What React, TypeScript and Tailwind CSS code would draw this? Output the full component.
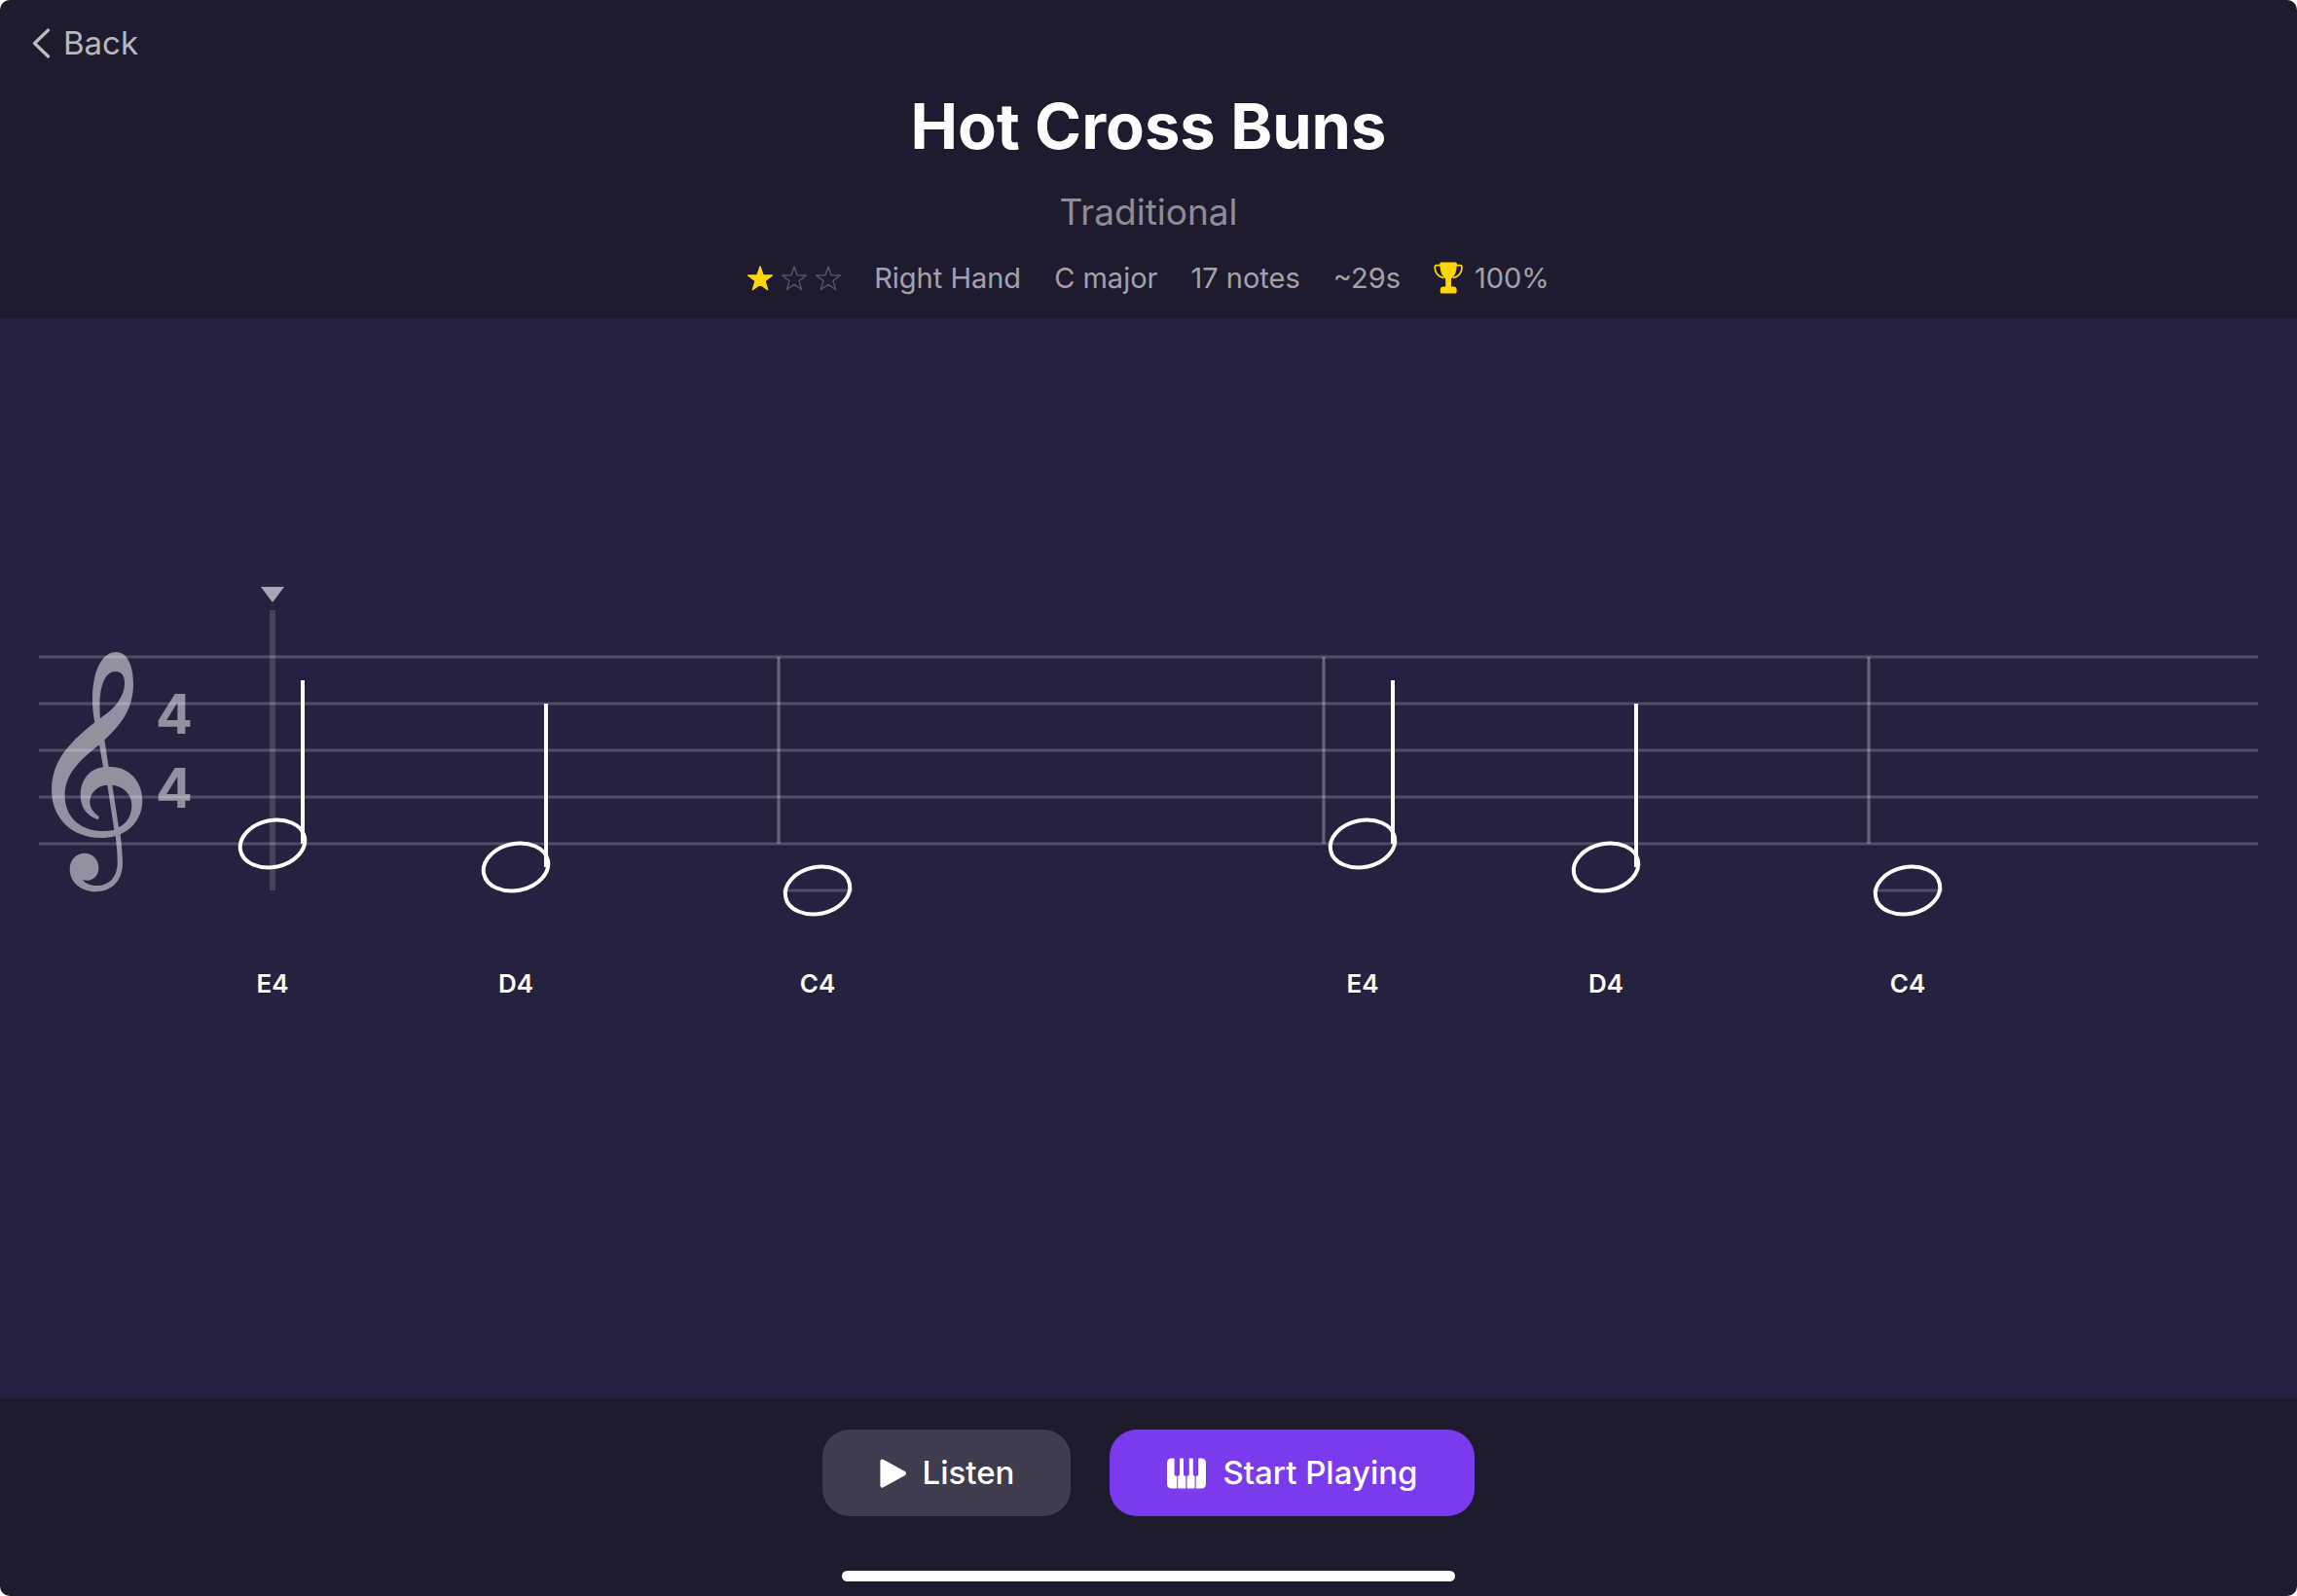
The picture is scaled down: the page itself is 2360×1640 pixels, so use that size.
interface StaffNote {
  name: string;
  x: number;
  y: number;
  stem?: boolean;
  ledger?: boolean;
}

const STAFF_LINES = [73, 121, 169, 217, 265];
const BAR_LINES = [760, 1320, 1880];

const NOTES: StaffNote[] = [
  { name: 'E4', x: 240, y: 265, stem: true },
  { name: 'D4', x: 490, y: 289, stem: true },
  { name: 'C4', x: 800, y: 313, ledger: true },
  { name: 'E4', x: 1360, y: 265, stem: true },
  { name: 'D4', x: 1610, y: 289, stem: true },
  { name: 'C4', x: 1920, y: 313, ledger: true },
];

const STAR_PATH = 'M13 1 L16 9.8 L25.4 10 L17.9 15.6 L20.7 24.6 L13 19.2 L5.3 24.6 L8.1 15.6 L0.6 10 L10 9.8 Z';

function Star({ filled }: { filled: boolean }) {
  return (
    <svg
      viewBox="0 0 26 26"
      className={filled ? 'h-[26px] w-[26px] text-[#ffd60a]' : 'h-[26px] w-[26px] text-white/25'}
      aria-hidden="true"
    >
      <path
        d={STAR_PATH}
        fill={filled ? 'currentColor' : 'none'}
        stroke="currentColor"
        strokeWidth="1.4"
        strokeLinejoin="round"
      />
    </svg>
  );
}

function Trophy() {
  return (
    <svg viewBox="0 0 30 34" className="h-[34px] w-[30px] text-[#ffd700]" aria-hidden="true">
      <path
        d="M7.6 0.6 H22.6 Q24 0.6 23.9 2.2 C23.7 9.5 22 14.4 18 17.4 V25.6 H20.6 Q23.6 25.6 23.6 28.6 V31 Q23.6 32.6 22 32.6 H8.4 Q6.8 32.6 6.8 31 V28.6 Q6.8 25.6 9.8 25.6 H12.2 V17.4 C8.2 14.4 6.5 9.5 6.3 2.2 Q6.2 0.6 7.6 0.6 Z"
        fill="currentColor"
      />
      <path
        d="M7 3.6 H3 Q1.2 3.6 1.2 5.6 C1.2 11 4.5 15.6 10.5 16.6 M23.2 3.6 H27.2 Q29 3.6 29 5.6 C29 11 25.7 15.6 19.7 16.6"
        fill="none"
        stroke="currentColor"
        strokeWidth="1.8"
      />
    </svg>
  );
}

function PianoKeys() {
  return (
    <svg viewBox="-1 0 42 32" className="h-8 w-[42px]" fill="currentColor" aria-hidden="true">
      <path d="M5 0.4 H7.6 V17 Q7.6 18.8 9.4 18.8 H10.3 V31.6 H5 Q0 31.6 0 26.6 V5.4 Q0 0.4 5 0.4 Z" />
      <path d="M13 0.4 H17 V17 Q17 18.8 18.8 18.8 H19.3 V31.6 H11.2 V18.8 Q13 18.8 13 17 Z" />
      <path d="M22.8 0.4 H26.8 V17 Q26.8 18.8 28.6 18.8 V31.6 H20.5 V18.8 H21 Q22.8 18.8 22.8 17 Z" />
      <path d="M32.2 0.4 H35 Q40 0.4 40 5.4 V26.6 Q40 31.6 35 31.6 H29.7 V18.8 H30.4 Q32.2 18.8 32.2 17 Z" />
    </svg>
  );
}

function TrebleClef() {
  return (
    <path
      transform="translate(-20 -22) scale(0.33333)"
      fillRule="evenodd"
      className="fill-white/50"
      d="M232 487 C222 440 224 390 228 370 C236 310 262 270 298 270 C334 270 351 315 351 368 C351 440 318 490 262 541 L275 624 C335 620 379 668 379 727 C379 775 352 815 311 832 C315 870 318 900 318 925 C316 975 285 1009 235 1009 C190 1009 155 980 155 940 C155 910 175 890 201 890 C226 890 244 910 244 935 C244 960 226 975 208 974 C203 974 199 973 195 972 C202 983 217 990 237 990 C278 990 303 962 302 915 C302 890 299 865 296 837 C282 842 265 843 252 843 C165 843 99 785 99 695 C99 600 160 545 232 487 Z
      M249 474 C244 420 248 330 297 330 C315 330 324 345 324 365 C324 410 290 447 249 474 Z
      M246 556 L258 625 C215 630 188 665 188 712 C188 750 210 778 243 787 L245 777 C228 765 217 750 217 732 C217 705 240 681 271 680 L292 819 C280 821 268 822 256 822 C185 822 140 778 140 712 C140 650 180 608 246 556 Z
      M286 680 C322 684 346 710 346 742 C346 775 330 800 306 810 Z"
    />
  );
}

function Note({ note }: { note: StaffNote }) {
  const { name, x, y, stem, ledger } = note;
  return (
    <g>
      {ledger && <line x1={x - 36} x2={x + 36} y1={y} y2={y} className="stroke-white/20" strokeWidth="3" />}
      <ellipse
        cx={x}
        cy={y}
        rx="33.6"
        ry="24"
        transform={`rotate(-12 ${x} ${y})`}
        fill="none"
        stroke="white"
        strokeWidth="4"
      />
      {stem && <line x1={x + 31} x2={x + 31} y1={y - 168} y2={y} stroke="white" strokeWidth="4" />}
      <text x={x} y="418" textAnchor="middle" className="fill-white text-[26px] font-semibold">
        {name}
      </text>
    </g>
  );
}

function Staff() {
  return (
    <svg className="h-[560px] w-full overflow-visible" role="img" aria-label="Sheet music">
      {STAFF_LINES.map((y) => (
        <line key={y} x1="0" x2="100%" y1={y} y2={y} className="stroke-white/20" strokeWidth="3" />
      ))}
      {BAR_LINES.map((x) => (
        <line key={x} x1={x} x2={x} y1="73" y2="265" className="stroke-white/30" strokeWidth="3" />
      ))}
      <TrebleClef />
      <g className="fill-white/50 text-[56px] font-bold" textAnchor="middle">
        <text x="139" y="152">4</text>
        <text x="139" y="228">4</text>
      </g>
      {/* playhead */}
      <rect x="237" y="25" width="6" height="288" className="fill-white/15" />
      <path d="M228 1 H252 L240 17 Z" className="fill-white/60" />
      {NOTES.map((note) => (
        <Note key={note.x} note={note} />
      ))}
    </svg>
  );
}

export default function App() {
  return (
    <div className="min-h-screen bg-white font-['Inter','Liberation_Sans',sans-serif]">
      <div className="flex min-h-screen flex-col overflow-hidden rounded-[10px] bg-[#1e1b2e]">
        <header className="flex flex-col pb-[21px]">
          <nav className="flex px-8 pt-6">
            <button type="button" className="flex items-center gap-[13px] text-[33px] leading-10 text-white/70">
              <svg viewBox="0 0 20 32" className="h-8 w-5" fill="none" aria-hidden="true">
                <path
                  d="M17.5 3 L3.5 16.5 L17.5 30"
                  stroke="currentColor"
                  strokeWidth="3.2"
                  strokeLinecap="round"
                  strokeLinejoin="round"
                />
              </svg>
              Back
            </button>
          </nav>
          <div className="flex flex-col items-center">
            <h1 className="mt-[26px] text-[65px] leading-20 font-bold text-white">Hot Cross Buns</h1>
            <p className="mt-6 text-[37px] leading-12 text-white/50">Traditional</p>
            <div className="mt-6 flex items-center gap-[34px] text-[29px] leading-10 text-white/60">
              <span className="flex gap-[9px]" role="img" aria-label="Difficulty 1 of 3">
                <Star filled />
                <Star filled={false} />
                <Star filled={false} />
              </span>
              <span>Right Hand</span>
              <span>C major</span>
              <span>17 notes</span>
              <span>~29s</span>
              <span className="flex items-center gap-3">
                <Trophy />
                100%
              </span>
            </div>
          </div>
        </header>

        <main className="flex flex-1 items-center overflow-hidden bg-[#252240] px-10">
          <Staff />
        </main>

        <footer className="flex flex-col items-center pt-8 pb-[15px]">
          <div className="flex gap-10 text-[33px] leading-[41px] font-medium text-white">
            <button type="button" className="flex items-center gap-4 rounded-[28px] bg-white/15 px-[58px] py-6">
              <svg viewBox="0 0 28 32" className="h-8 w-7" aria-hidden="true">
                <path
                  d="M3.6 3.6 L25.8 16 L3.6 28.4 Z"
                  fill="currentColor"
                  stroke="currentColor"
                  strokeWidth="4.4"
                  strokeLinejoin="round"
                />
              </svg>
              Listen
            </button>
            <button type="button" className="flex items-center gap-4 rounded-[28px] bg-[#7c3aed] px-[58px] py-6">
              <PianoKeys />
              Start Playing
            </button>
          </div>
          <div className="mt-14 h-[11px] w-[630px] rounded-full bg-white" />
        </footer>
      </div>
    </div>
  );
}
